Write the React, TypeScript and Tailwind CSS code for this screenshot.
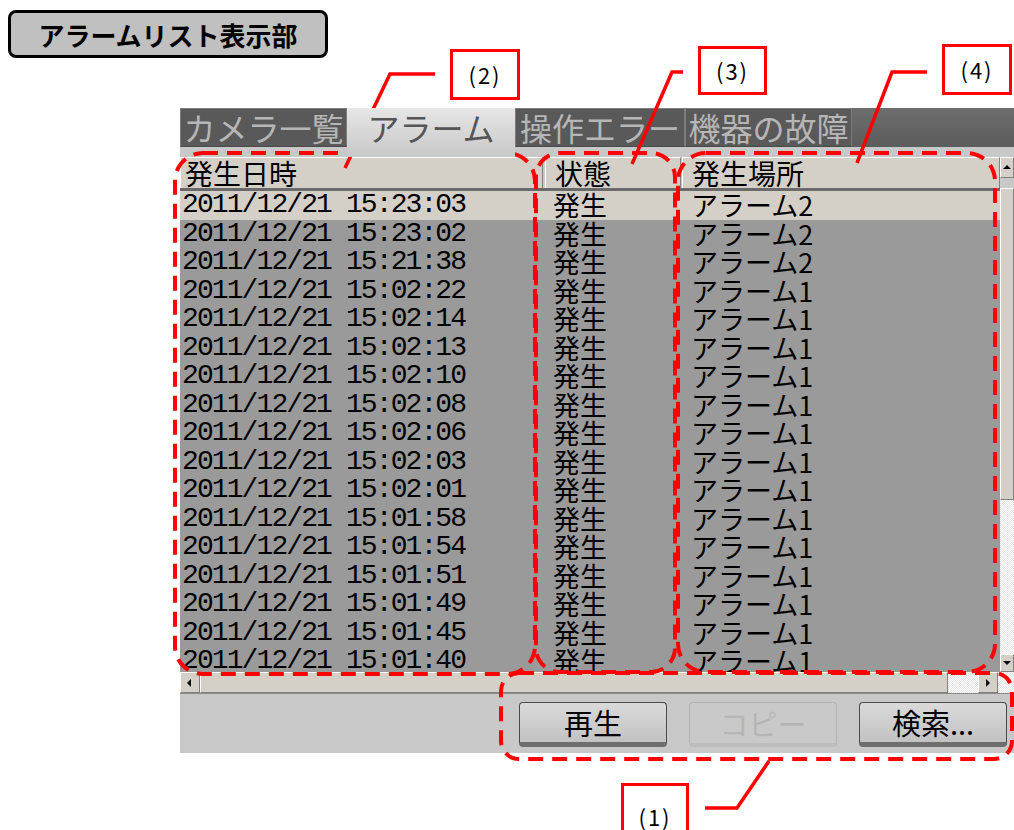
import React from 'react';

const rows: [string, string, string][] = [
  ['2011/12/21 15:23:03', '発生', 'アラーム2'],
  ['2011/12/21 15:23:02', '発生', 'アラーム2'],
  ['2011/12/21 15:21:38', '発生', 'アラーム2'],
  ['2011/12/21 15:02:22', '発生', 'アラーム1'],
  ['2011/12/21 15:02:14', '発生', 'アラーム1'],
  ['2011/12/21 15:02:13', '発生', 'アラーム1'],
  ['2011/12/21 15:02:10', '発生', 'アラーム1'],
  ['2011/12/21 15:02:08', '発生', 'アラーム1'],
  ['2011/12/21 15:02:06', '発生', 'アラーム1'],
  ['2011/12/21 15:02:03', '発生', 'アラーム1'],
  ['2011/12/21 15:02:01', '発生', 'アラーム1'],
  ['2011/12/21 15:01:58', '発生', 'アラーム1'],
  ['2011/12/21 15:01:54', '発生', 'アラーム1'],
  ['2011/12/21 15:01:51', '発生', 'アラーム1'],
  ['2011/12/21 15:01:49', '発生', 'アラーム1'],
  ['2011/12/21 15:01:45', '発生', 'アラーム1'],
  ['2011/12/21 15:01:40', '発生', 'アラーム1'],
];

const tabs = [
  { label: 'カメラ一覧', w: 'w-[167px]', active: false },
  { label: 'アラーム', w: 'w-[168px]', active: true },
  { label: '操作エラー', w: 'w-[170px]', active: false },
  { label: '機器の故障', w: 'w-[167px]', active: false },
];

const dots = 'bg-[repeating-conic-gradient(#e6e6e6_0_25%,#ffffff_0_50%)] bg-[length:2px_2px]';

const ArrowBtn = ({ dir }: { dir: 'up' | 'down' | 'left' | 'right' }) => {
  const pts = {
    up: '2,7 10,7 6,3',
    down: '2,4 10,4 6,8',
    left: '7,2 7,10 3,6',
    right: '4,2 4,10 8,6',
  }[dir];
  return (
    <div className="flex-1 flex items-center justify-center bg-[#d4d0c8] border-t border-l border-t-white border-l-white border-r border-b border-r-[#808080] border-b-[#808080]">
      <svg width="12" height="12" viewBox="0 0 12 12">
        <polygon points={pts} fill="#000" />
      </svg>
    </div>
  );
};

const Button = ({ label, disabled }: { label: string; disabled?: boolean }) => (
  <div
    className={`w-[148px] h-[45px] rounded-[4px] flex items-center justify-center text-[29px] leading-none ${
      disabled
        ? 'bg-[#c9c9c9] border border-[#b4b4b4] border-b-[4px] border-b-[#bdbdbd] text-[#b5b5b5]'
        : 'bg-gradient-to-b from-[#dadada] to-[#c2c2c2] border border-[#4a4a4a] border-b-[5px] border-b-[#6e6e6e] text-black'
    }`}
  >
    {label}
  </div>
);

const Label = ({ text, pos }: { text: string; pos: string }) => (
  <div
    className={`absolute ${pos} border-[3px] border-[#ff0000] bg-white flex items-center justify-center text-[22px] tracking-[2px] text-black`}
  >
    {text}
  </div>
);

export default function App() {
  return (
    <div className="relative w-[1014px] h-[830px] bg-white overflow-hidden font-['Noto_Sans_CJK_JP',sans-serif]">
      {/* title */}
      <div className="ml-[8px] mt-[10px] w-[320px] h-[48px] rounded-[8px] border-[3px] border-black bg-[#c0c0c0] flex items-center justify-center text-[26px] font-bold text-black">
        アラームリスト表示部
      </div>

      {/* window */}
      <div className="ml-[180px] mt-[50px] w-[834px] flex flex-col">
        {/* tab strip */}
        <div className="h-[39px] flex bg-gradient-to-b from-[#6e6e6e] to-[#5c5c5c]">
          {tabs.map((t) =>
            t.active ? (
              <div
                key={t.label}
                className={`${t.w} h-[49px] bg-gradient-to-b from-[#e6e6e6] to-[#c8c8c8] text-[#555555] text-[32px] leading-[39px] text-center z-10`}
              >
                {t.label}
              </div>
            ) : (
              <div
                key={t.label}
                className={`${t.w} bg-[#595959] border border-[#7c7c7c] border-b-[#4a4a4a] text-[#b6b6b6] text-[32px] leading-[37px] text-center`}
              >
                {t.label}
              </div>
            )
          )}
          <div className="flex-1" />
        </div>
        <div className="h-[10px] bg-[#c8c8c8]" />

        {/* header */}
        <div className="flex bg-[#c8c8c8] h-[34px]">
          <div className="w-[363px] h-[31px] bg-[#d4d0c8] border-t border-l border-t-white border-l-white border-r border-r-[#808080] pl-[4px] text-[28px] leading-[30px] text-black">
            発生日時
          </div>
          <div className="w-[2px]" />
          <div className="w-[136px] h-[31px] bg-[#d4d0c8] border-t border-l border-t-white border-l-white border-r border-r-[#808080] pl-[9px] text-[28px] leading-[30px] text-black">
            状態
          </div>
          <div className="w-[1px]" />
          <div className="w-[318px] h-[31px] bg-[#d4d0c8] border-t border-l border-t-white border-l-white border-r border-r-[#808080] pl-[9px] text-[28px] leading-[30px] text-black">
            発生場所
          </div>
          <div className="flex-1 flex flex-col">
            <div className="h-[21px] w-full flex flex-col">
              <ArrowBtn dir="up" />
            </div>
          </div>
        </div>

        {/* list + vertical scrollbar */}
        <div className="flex h-[484px] -mt-[3px]">
          <div className="w-[820px] flex flex-col">
            <div className="h-[3px] bg-[#6a6a6a]" />
            <div className="flex-1 overflow-hidden bg-[#9a9a9a]">
              {rows.map((r, i) => (
                <div
                  key={i}
                  className={`flex h-[28.5px] text-black ${i === 0 ? 'bg-[#d4d0c8]' : ''}`}
                >
                  <div className="w-[363px] pl-[2px] font-['Liberation_Mono',monospace] text-[28px] tracking-[-1.9px] leading-[28.5px] whitespace-pre">
                    {r[0]}
                  </div>
                  <div className="w-[139px] pl-[10px] text-[27px] leading-[28.5px]">{r[1]}</div>
                  <div className="flex-1 pl-[9px] text-[27px] leading-[28.5px]">{r[2]}</div>
                </div>
              ))}
            </div>
          </div>
          <div className="flex-1 flex flex-col">
            <div className="h-[312px] bg-[#d4d0c8] border-l border-t border-l-white border-t-white border-r border-b border-r-[#808080] border-b-[#808080]" />
            <div className={`flex-1 ${dots}`} />
            <div className="h-[18px] flex flex-col">
              <ArrowBtn dir="down" />
            </div>
          </div>
        </div>

        {/* horizontal scrollbar */}
        <div className="flex h-[21px] bg-[#d4d0c8]">
          <div className="w-[20px] flex flex-col">
            <ArrowBtn dir="left" />
          </div>
          <div className="w-[748px] bg-[#d4d0c8] border-l border-t border-l-white border-t-white border-r border-b border-r-[#808080] border-b-[#808080]" />
          <div className={`w-[30px] ${dots}`} />
          <div className="w-[20px] flex flex-col">
            <ArrowBtn dir="right" />
          </div>
          <div className={`flex-1 ${dots}`} />
        </div>

        {/* button panel */}
        <div className="h-[60px] bg-[#c8c8c8] border-t border-[#8a8a8a] flex justify-end items-start gap-[22px] pr-[7px] pt-[8px]">
          <Button label="再生" />
          <Button label="コピー" disabled />
          <Button label="検索..." />
        </div>
      </div>

      {/* annotations */}
      <svg className="absolute inset-0 pointer-events-none" width="1014" height="830">
        <g fill="none" stroke="#ff0000" strokeWidth="4" strokeDasharray="15 9">
          <rect x="175" y="153" width="360" height="521" rx="28" />
          <rect x="536" y="153" width="139" height="519" rx="24" />
          <rect x="678" y="153" width="317" height="519" rx="28" />
          <rect x="501" y="673" width="511" height="86" rx="18" />
        </g>
        <g fill="none" stroke="#ff0000" strokeWidth="3.5">
          <polyline points="435,74 390,74 345,168" />
          <polyline points="683,72 672,72 632,164" />
          <polyline points="927,72 892,72 857,163" />
          <polyline points="705,808 737,808 769,761" />
        </g>
      </svg>
      <Label text="(2)" pos="left-[450px] top-[49px] w-[70px] h-[51px]" />
      <Label text="(3)" pos="left-[698px] top-[46px] w-[69px] h-[49px]" />
      <Label text="(4)" pos="left-[942px] top-[44px] w-[70px] h-[51px]" />
      <div className="absolute left-[621px] top-[783px] w-[68px] h-[60px] border-[3px] border-[#ff0000] bg-white flex items-start justify-center pt-[14px] text-[22px] tracking-[2px] text-black">
        (1)
      </div>
    </div>
  );
}
